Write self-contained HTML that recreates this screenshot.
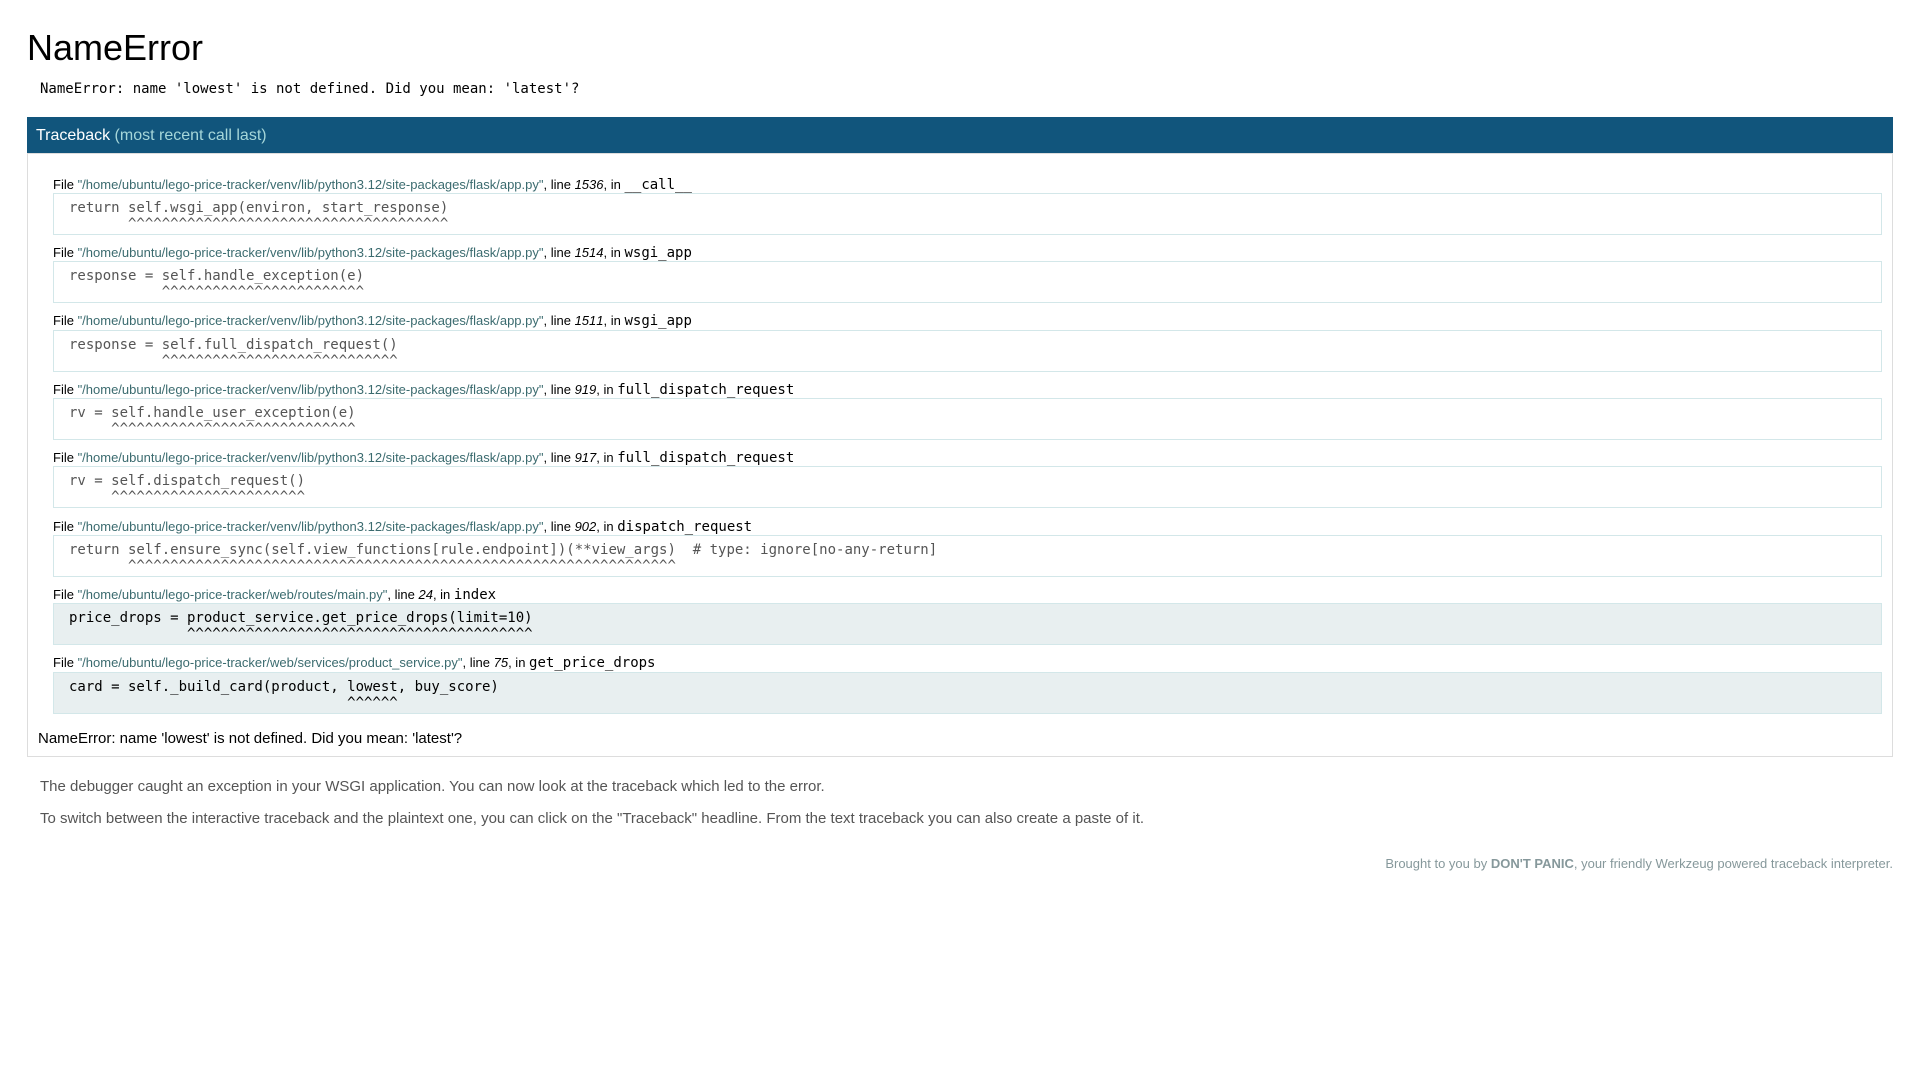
<!DOCTYPE html>
<html>
<head>
<meta charset="utf-8">
<title>NameError</title>
<style>
html{background:#fff}
body{font-family:"Liberation Sans",sans-serif;color:#000;text-align:center;margin:1em;padding:0;font-size:15px}
h1,h2,h3{font-weight:normal}
pre,code{font-family:"DejaVu Sans Mono",monospace;font-size:14px}
div.debugger{text-align:left;padding:12px;margin:auto;background:#fff}
h1{font-size:36px;margin:0 0 .3em 0}
div.detail p{margin:0 0 8px 13px;font-size:14px;white-space:pre-wrap;font-family:"DejaVu Sans Mono",monospace;position:relative;top:1px}
div.explanation{margin:20px 13px;font-size:15px;color:#555;position:relative;top:1px}
div.explanation p{margin:15px 0}
div.footer{font-size:13px;text-align:right;margin:30px 0;color:#86989B}
h2{font-size:16px;margin:1.3em 0 0 0;padding:10px 9px 8px;background:#11557C;color:#fff}
h2 em{font-style:normal;color:#A5D6D9;font-weight:normal}
div.traceback{border:1px solid #ddd;margin:0 0 1em 0;padding:10px}
div.traceback h3{font-size:1em;margin:0 0 .8em 0}
div.traceback ul{list-style:none;margin:0;padding:0 0 0 1em}
div.traceback h4{font-size:13px;font-weight:normal;margin:.7em 0 .1em 0;position:relative;top:1px}
div.traceback h4 em{font-kerning:none}
div.traceback pre{margin:0;padding:6px 0 2px 15px;background:#E8EFF0;border:1px solid #D3E7E9}
div.traceback .library pre{background:#fff;color:#555}
cite.filename{font-style:normal;color:#3B6B6F}
div.traceback blockquote{margin:1em 0 0 0;padding:0;position:relative;top:1px}
</style>
</head>
<body>
<div class="debugger">
<h1>NameError</h1>
<div class="detail"><p class="errormsg">NameError: name 'lowest' is not defined. Did you mean: 'latest'?</p></div>
<h2 class="traceback">Traceback <em>(most recent call last)</em></h2>
<div class="traceback">
<h3></h3>
<ul>
<li><h4>File <cite class="filename">"/home/ubuntu/lego-price-tracker/venv/lib/python3.12/site-packages/flask/app.py"</cite>, line <em>1536</em>, in <code>__call__</code></h4>
<div class="library"><pre>return self.wsgi_app(environ, start_response)
       ^^^^^^^^^^^^^^^^^^^^^^^^^^^^^^^^^^^^^^</pre></div></li>
<li><h4>File <cite class="filename">"/home/ubuntu/lego-price-tracker/venv/lib/python3.12/site-packages/flask/app.py"</cite>, line <em>1514</em>, in <code>wsgi_app</code></h4>
<div class="library"><pre>response = self.handle_exception(e)
           ^^^^^^^^^^^^^^^^^^^^^^^^</pre></div></li>
<li><h4>File <cite class="filename">"/home/ubuntu/lego-price-tracker/venv/lib/python3.12/site-packages/flask/app.py"</cite>, line <em>1511</em>, in <code>wsgi_app</code></h4>
<div class="library"><pre>response = self.full_dispatch_request()
           ^^^^^^^^^^^^^^^^^^^^^^^^^^^^</pre></div></li>
<li><h4>File <cite class="filename">"/home/ubuntu/lego-price-tracker/venv/lib/python3.12/site-packages/flask/app.py"</cite>, line <em>919</em>, in <code>full_dispatch_request</code></h4>
<div class="library"><pre>rv = self.handle_user_exception(e)
     ^^^^^^^^^^^^^^^^^^^^^^^^^^^^^</pre></div></li>
<li><h4>File <cite class="filename">"/home/ubuntu/lego-price-tracker/venv/lib/python3.12/site-packages/flask/app.py"</cite>, line <em>917</em>, in <code>full_dispatch_request</code></h4>
<div class="library"><pre>rv = self.dispatch_request()
     ^^^^^^^^^^^^^^^^^^^^^^^</pre></div></li>
<li><h4>File <cite class="filename">"/home/ubuntu/lego-price-tracker/venv/lib/python3.12/site-packages/flask/app.py"</cite>, line <em>902</em>, in <code>dispatch_request</code></h4>
<div class="library"><pre>return self.ensure_sync(self.view_functions[rule.endpoint])(**view_args)  # type: ignore[no-any-return]
       ^^^^^^^^^^^^^^^^^^^^^^^^^^^^^^^^^^^^^^^^^^^^^^^^^^^^^^^^^^^^^^^^^</pre></div></li>
<li><h4>File <cite class="filename">"/home/ubuntu/lego-price-tracker/web/routes/main.py"</cite>, line <em>24</em>, in <code>index</code></h4>
<div><pre>price_drops = product_service.get_price_drops(limit=10)
              ^^^^^^^^^^^^^^^^^^^^^^^^^^^^^^^^^^^^^^^^^</pre></div></li>
<li><h4>File <cite class="filename">"/home/ubuntu/lego-price-tracker/web/services/product_service.py"</cite>, line <em>75</em>, in <code>get_price_drops</code></h4>
<div><pre>card = self._build_card(product, lowest, buy_score)
                                 ^^^^^^</pre></div></li>
</ul>
<blockquote>NameError: name 'lowest' is not defined. Did you mean: 'latest'?</blockquote>
</div>
<div class="explanation">
<p>The debugger caught an exception in your WSGI application. You can now look at the traceback which led to the error.</p>
<p>To switch between the interactive traceback and the plaintext one, you can click on the "Traceback" headline. From the text traceback you can also create a paste of it.</p>
</div>
<div class="footer">Brought to you by <strong>DON'T PANIC</strong>, your friendly Werkzeug powered traceback interpreter.</div>
</div>
</body>
</html>
